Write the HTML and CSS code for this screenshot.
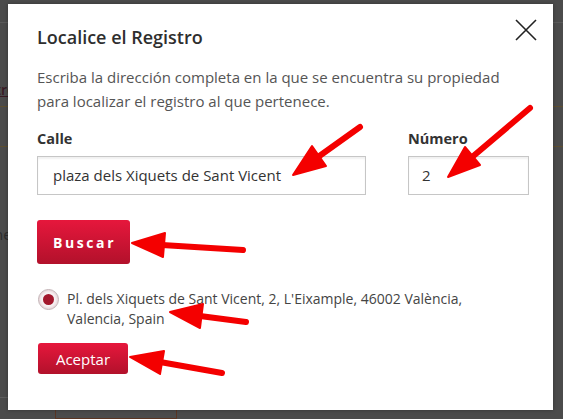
FILE: index.html
```html
<!DOCTYPE html>
<html lang="es">
<head>
<meta charset="utf-8">
<title>Localice el Registro</title>
<link rel="stylesheet" href="styles.css">
</head>
<body>
<div class="page">
  <div class="page-rule page-rule-top"></div>
  <div class="page-link">Registro</div>
  <div class="page-rule page-rule-brown first"></div>
  <div class="page-rule page-rule-brown second"></div>
  <div class="page-text">Seleccione<br>con</div>
  <div class="page-rule page-rule-bottom"></div>
  <div class="page-box"></div>
</div>

<div class="modal">
  <button class="close" aria-label="Cerrar">
    <svg width="22" height="22" viewBox="0 0 22 22"><path d="M1 1 L21 21 M21 1 L1 21" stroke="#222" stroke-width="1.6" fill="none"/></svg>
  </button>
  <h2 class="title">Localice el Registro</h2>
  <p class="desc">Escriba la dirección completa en la que se encuentra su propiedad para localizar el registro al que pertenece.</p>
  <div class="fields">
    <div class="field field-street">
      <label class="label">Calle</label>
      <div class="input">plaza dels Xiquets de Sant Vicent</div>
    </div>
    <div class="field field-number">
      <label class="label">Número</label>
      <div class="input input-number">2</div>
    </div>
  </div>
  <button class="btn btn-search">Buscar</button>
  <div class="result">
    <span class="radio"><span class="radio-dot"></span></span>
    <span class="result-text">Pl. dels Xiquets de Sant Vicent, 2, L'Eixample, 46002 València, Valencia, Spain</span>
  </div>
  <button class="btn btn-accept">Aceptar</button>
</div>

<svg class="arrows" width="563" height="419" viewBox="0 0 563 419">
  <g stroke="#f40000" stroke-width="6" stroke-linecap="round" fill="#f40000" stroke-linejoin="round">
    <line x1="360" y1="127" x2="318" y2="157"/>
    <polygon points="293,175 326,166 312,146" stroke-width="2"/>
    <line x1="530" y1="108" x2="471" y2="158"/>
    <polygon points="448,177 480,165 465,147" stroke-width="2"/>
    <line x1="243" y1="250" x2="162" y2="245"/>
    <polygon points="132,243 165,233 163,257" stroke-width="2"/>
    <line x1="246" y1="322" x2="200" y2="316"/>
    <polygon points="170,312 203,304 200,328" stroke-width="2"/>
    <line x1="222" y1="373" x2="160" y2="362"/>
    <polygon points="130,357 164,351 160,374" stroke-width="2"/>
  </g>
</svg>
</body>
</html>
```

FILE: styles.css
```css
html, body {
  margin: 0;
  padding: 0;
}
body {
  width: 563px;
  height: 419px;
  overflow: hidden;
  background: #4b4b4b;
  font-family: "Open Sans", "Noto Sans", sans-serif;
  position: relative;
}

/* dimmed page behind the modal */
.page {
  display: flex;
  flex-direction: column;
  height: 419px;
}
.page-rule {
  height: 1px;
  background: #5a5a5a;
}
.page-rule-top {
  margin-top: 22px;
}
.page-link {
  margin-top: 57px;
  margin-left: -40px;
  font-size: 14px;
  line-height: 20px;
  color: #3a1a24;
  text-decoration: underline;
  font-weight: 600;
}
.page-rule-brown {
  background: #5e4f30;
}
.page-rule-brown.first {
  margin-top: 6px;
}
.page-rule-brown.second {
  margin-top: 39px;
}
.page-text {
  margin-top: 76px;
  margin-left: -62px;
  font-size: 15px;
  line-height: 25px;
  color: #2c2c2c;
}
.page-rule-bottom {
  margin-top: 125px;
  background: #5e5e5e;
  width: 40px;
}
.page-box {
  margin-top: 2px;
  margin-left: 55px;
  width: 120px;
  height: 20px;
  border: 1px solid #5a3624;
}

/* modal */
.modal {
  position: absolute;
  left: 8px;
  top: 4px;
  width: 545px;
  height: 406px;
  box-sizing: border-box;
  background: #fff;
  padding: 18px 24px 0 29px;
  box-shadow: 0 0 4px rgba(0, 0, 0, 0.3);
}
.close {
  position: absolute;
  right: 16px;
  top: 15px;
  padding: 0;
  border: 0;
  background: none;
  width: 22px;
  height: 22px;
}
.close svg {
  display: block;
}
.title {
  margin: 0;
  font-size: 18px;
  line-height: 30px;
  font-weight: 600;
  color: #2e2e2e;
}
.desc {
  margin: 13px 0 0;
  font-size: 15px;
  line-height: 24px;
  color: #555;
}
.fields {
  display: flex;
  gap: 42px;
  margin-top: 16px;
}
.field {
  display: flex;
  flex-direction: column;
}
.field-street {
  width: 329px;
}
.field-number {
  width: 121px;
}
.label {
  font-size: 14.5px;
  line-height: 20px;
  font-weight: 700;
  color: #333;
  margin-bottom: 7px;
}
.input {
  height: 39px;
  box-sizing: border-box;
  border: 1px solid #c6c6c6;
  box-shadow: inset 0 2px 2px rgba(0, 0, 0, 0.06);
  padding: 0 15px;
  font-size: 15px;
  line-height: 37px;
  color: #333;
}
.input-number {
  padding-left: 13px;
}
.btn {
  display: block;
  border: 0;
  border-radius: 3px;
  color: #fff;
  font-family: inherit;
  background: linear-gradient(#e6173c, #b2112b);
  padding: 0;
}
.btn-search {
  margin-top: 25px;
  width: 93px;
  height: 44px;
  font-size: 14px;
  font-weight: 700;
  letter-spacing: 2.6px;
  text-indent: 2px;
}
.result {
  display: flex;
  align-items: flex-start;
  gap: 8px;
  margin-top: 25px;
  margin-left: 1px;
}
.radio {
  flex: none;
  width: 21px;
  height: 21px;
  box-sizing: border-box;
  border: 1px solid #c2b2b5;
  border-radius: 50%;
  background: #f7f2f3;
  box-shadow: inset 0 0 3px rgba(150, 40, 60, 0.3);
  display: flex;
  align-items: center;
  justify-content: center;
}
.radio-dot {
  width: 11px;
  height: 11px;
  border-radius: 50%;
  background: #a3172c;
}
.result-text {
  font-size: 14px;
  line-height: 20px;
  color: #444;
  width: 440px;
}
.btn-accept {
  margin-top: 14px;
  margin-left: 1px;
  width: 90px;
  height: 31px;
  font-size: 15px;
}

.arrows {
  position: absolute;
  left: 0;
  top: 0;
  pointer-events: none;
}
```
